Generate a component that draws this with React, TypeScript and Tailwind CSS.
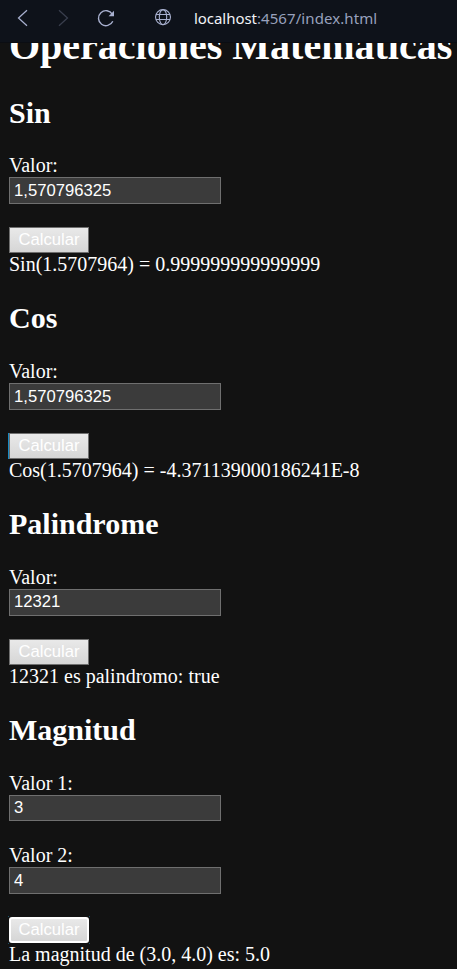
import type { ReactNode } from "react";

function BrowserBar() {
  return (
    <header className="flex h-[43px] shrink-0 items-start border-b border-[#0b0d12] bg-[#0e121a] font-['Noto_Sans',sans-serif]">
      <svg width="190" height="42" viewBox="0 0 190 42" fill="none" className="shrink-0" strokeWidth="1.25">
        <path d="M27 10.300 18.500 18l8.500 7.700" stroke="#a8b0cf" />
        <path d="M59 10.300 67.500 18 59 25.700" stroke="#3a3f4e" />
        <path d="M112.400 14.300A7.500 7.500 0 1 0 112.800 21.300" stroke="#a8b0cf" strokeWidth="1.4" />
        <path d="M114 10.800v5.400h-5.400z" fill="#a8b0cf" />
        <g stroke="#a8b0cf" strokeWidth="1.1">
          <circle cx="163" cy="17.100" r="7.500" />
          <ellipse cx="163" cy="17.100" rx="3.700" ry="7.500" />
          <path d="M156 14.500h14M156 19.500h14" />
        </g>
      </svg>
      <span className="ml-1 mt-[8px] whitespace-nowrap text-[15px] leading-[20px] tracking-[0.08px] text-[#98a1bd]">
        <span className="tracking-[-0.05px] text-[#f2f3f7]">localhost</span>:4567/index.html
      </span>
    </header>
  );
}

function Field({ label, value, short = false, raised = false }: { label: string; value: string; short?: boolean; raised?: boolean }) {
  return (
    <label className="block">
      <span className="block h-[23px] leading-[23px]">{label}</span>
      <input
        defaultValue={value}
        className={`block w-[212px] border border-[#6f6f6f] bg-[#3b3b3b] px-1 pt-0 font-['Liberation_Sans',sans-serif] text-[16.67px] text-white outline-none ${short ? "h-[26px]" : "h-[27px]"} ${raised ? "pb-[2px]" : "pb-0"}`}
      />
    </label>
  );
}

function CalcButton({ variant = "plain" }: { variant?: "plain" | "edge" | "focus" }) {
  const look = {
    plain: "border border-[#6f6f6f]",
    edge: "border border-[#6f6f6f] shadow-[-1px_0_0_#168bc5]",
    focus: "rounded-[3px] border-2 border-white",
  }[variant];
  return (
    <button
      className={`relative mt-[23px] flex h-[26px] w-20 items-center justify-center bg-linear-to-b from-[#e9e9e9] to-[#d6d6d6] pb-px font-['Liberation_Sans',sans-serif] text-[16.67px] leading-[19px] text-white ${look}`}
    >
      Calcular
      {variant === "focus" && (
        <>
          <i className="absolute -left-[3px] -top-[3px] size-px bg-[#1b5069]" />
          <i className="absolute -right-[3px] -top-[3px] size-px bg-[#1b5069]" />
          <i className="absolute -bottom-[3px] -left-[3px] size-px bg-[#1b5069]" />
          <i className="absolute -bottom-[3px] -right-[3px] size-px bg-[#1b5069]" />
        </>
      )}
    </button>
  );
}

function Section({ title, result, first = false, children }: { title: string; result: string; first?: boolean; children: ReactNode }) {
  return (
    <section className="h-[206px] shrink-0">
      <h2 className={`h-[34px] text-[30px] font-bold leading-[34px] ${first ? "mb-[24px]" : "-mt-px mb-[25px]"}`}>{title}</h2>
      {children}
      <p className="h-[23px] whitespace-nowrap leading-[23px]">{result}</p>
    </section>
  );
}

export default function App() {
  return (
    <div className="flex h-[969px] w-[457px] flex-col overflow-hidden bg-[#121212] font-['Liberation_Serif',serif] text-[20px] text-white">
      <BrowserBar />
      <main className="flex min-h-0 flex-1 flex-col overflow-hidden pl-[9px]">
        <h1 className="-mt-[15px] mb-[33px] h-[35px] shrink-0 whitespace-nowrap text-[40px] font-bold leading-[35px]">
          Operaciones Matematicas
        </h1>
        <Section first title="Sin" result="Sin(1.5707964) = 0.999999999999999">
          <Field label="Valor:" value="1,570796325" />
          <CalcButton />
        </Section>
        <div className="-mt-px flex flex-col pt-px">
          <Section title="Cos" result="Cos(1.5707964) = -4.371139000186241E-8">
            <Field label="Valor:" value="1,570796325" />
            <CalcButton variant="edge" />
          </Section>
          <Section title="Palindrome" result="12321 es palindromo: true">
            <Field label="Valor:" value="12321" raised />
            <CalcButton />
          </Section>
          <Section title="Magnitud" result="La magnitud de (3.0, 4.0) es: 5.0">
            <Field label="Valor 1:" value="3" short />
            <div className="mt-[23px]">
              <Field label="Valor 2:" value="4" />
            </div>
            <CalcButton variant="focus" />
          </Section>
        </div>
      </main>
    </div>
  );
}
